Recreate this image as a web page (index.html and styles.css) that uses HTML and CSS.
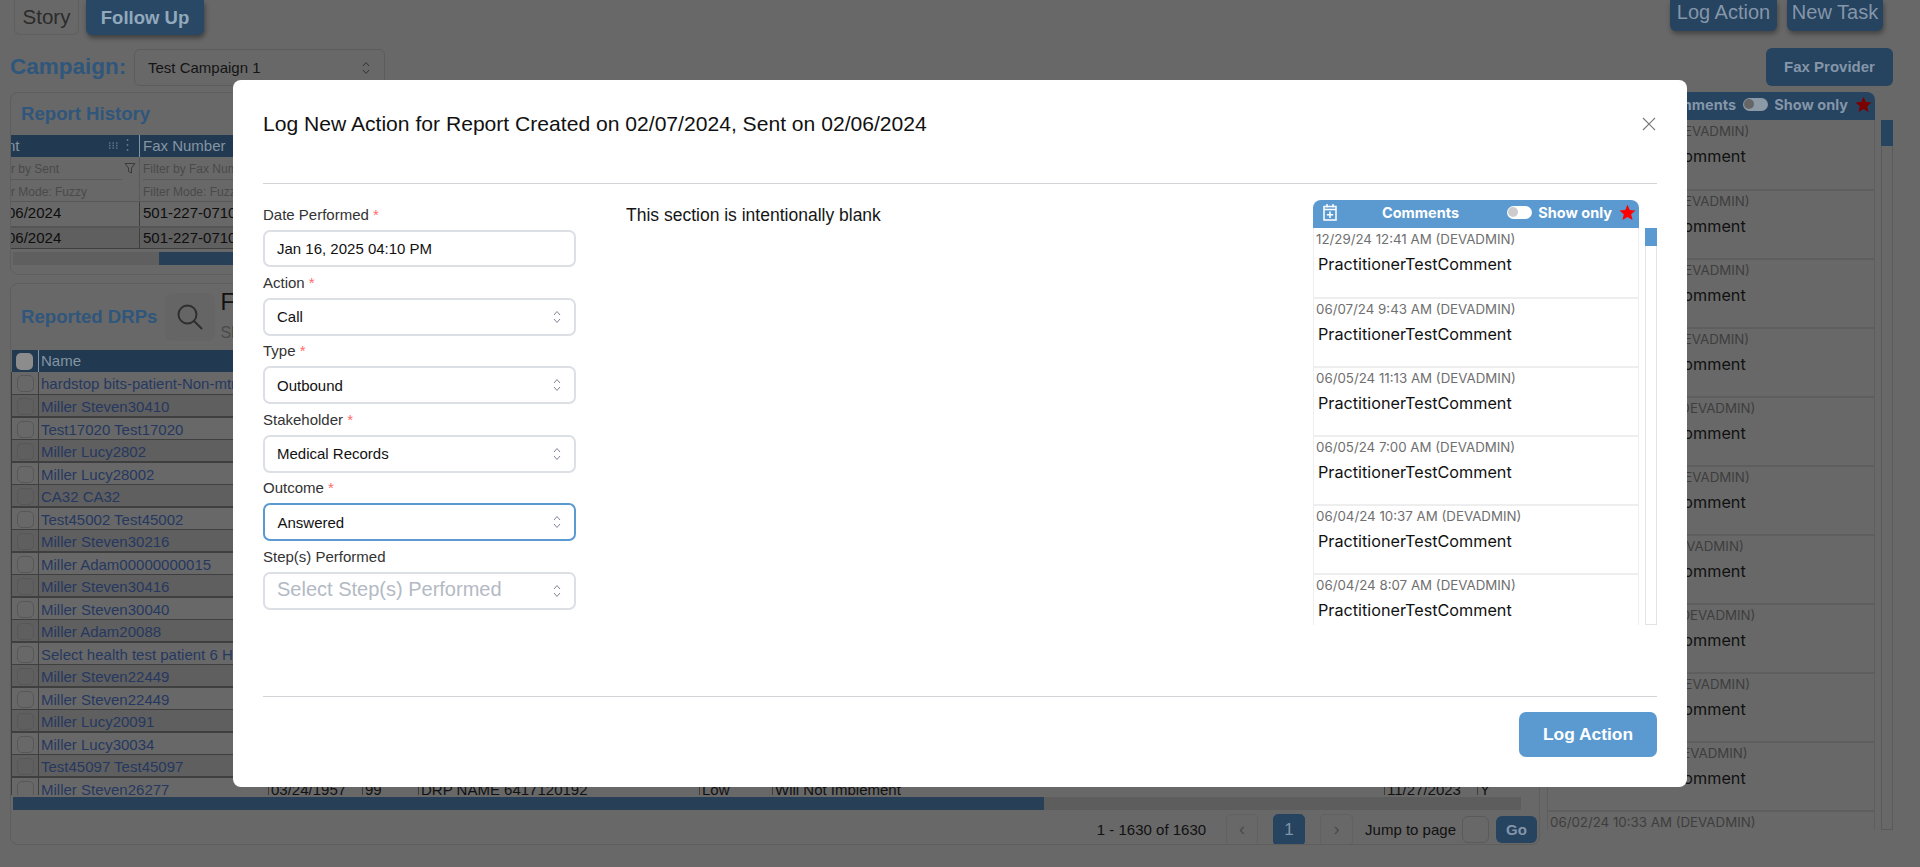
FILE: index.html
```html
<!DOCTYPE html>
<html lang="en">
<head>
    <meta charset="UTF-8">
    <meta name="viewport" content="width=device-width, initial-scale=1.0">
    <title>Log Action</title>
    <link rel="stylesheet" href="styles.css">
</head>
<body>

<svg class="icon-defs" aria-hidden="true">
    <symbol id="chevrons" viewBox="0 0 8 14">
        <path d="M1 5 L4 1.5 L7 5 M1 9 L4 12.5 L7 9" fill="none" stroke="currentColor" stroke-width="1"/>
    </symbol>
    <symbol id="star" viewBox="0 0 20 20">
        <path d="M10 .8 L12.7 7 L19.4 7.6 L14.3 12 L15.9 18.9 L10 15.2 L4.1 18.9 L5.7 12 L.6 7.6 L7.3 7 Z" fill="currentColor"/>
    </symbol>
    <symbol id="calendar" viewBox="0 0 14 18">
        <path d="M1 3.5 H13 V17 H1 Z M1 6.5 H13 M4 1 V4.5 M10 1 V4.5 M7 8.5 V15 M3.8 11.7 H10.2" fill="none" stroke="currentColor" stroke-width="1.5"/>
    </symbol>
</svg>

<div class="page">
    <div class="topbar">
        <div class="tabs">
            <button class="tab">Story</button>
            <button class="tab tab-active">Follow Up</button>
        </div>
        <div class="actions">
            <button class="action-btn">Log Action</button>
            <button class="action-btn">New Task</button>
        </div>
    </div>

    <div class="campaign-row">
        <span class="campaign-label">Campaign:</span>
        <div class="campaign-select">Test Campaign 1
            <svg class="chev"><use href="#chevrons"/></svg>
        </div>
        <button class="fax-btn">Fax Provider</button>
    </div>

    <div class="columns">
        <div class="left-col">
            <section class="card history-card">
                <h3 class="card-title">Report History</h3>
                <div class="history-table">
                    <div class="history-head">
                        <div class="history-col first">nt
                            <span class="col-tools">
                                <svg width="9" height="7" viewBox="0 0 9 7"><path d="M0 1h1.500M3.500 1h1.500M7 1h1.500M0 3.500h1.500M3.500 3.500h1.500M7 3.500h1.500M0 6h1.500M3.500 6h1.500M7 6h1.500" stroke="#5f7488" stroke-width="1.500"/></svg>
                                <svg width="3" height="12" viewBox="0 0 3 12"><path d="M1.500 0v2M1.500 5v2M1.500 10v2" stroke="#5f7488" stroke-width="1.500"/></svg>
                            </span>
                        </div>
                        <div class="history-col">Fax Number</div>
                    </div>
                    <div class="history-filter">
                        <div class="history-col first">
                            <span class="filter-input">r by Sent</span>
                            <svg class="funnel" width="12" height="12" viewBox="0 0 12 12"><path d="M1 1.500 H11 L7.500 6 V11 L4.500 9.500 V6 Z" fill="none" stroke="#3a3a3a" stroke-width="1"/></svg>
                            <span class="filter-mode">r Mode: Fuzzy</span>
                        </div>
                        <div class="history-col">
                            <span class="filter-input">Filter by Fax Number</span>
                            <span class="filter-mode">Filter Mode: Fuzzy</span>
                        </div>
                    </div>
                    <div class="history-row">
                        <div class="history-col first">06/2024</div>
                        <div class="history-col">501-227-0710</div>
                    </div>
                    <div class="history-row alt">
                        <div class="history-col first">06/2024</div>
                        <div class="history-col">501-227-0710</div>
                    </div>
                </div>
                <div class="h-scroll history-scroll"><div class="h-thumb"></div></div>
            </section>

            <section class="card drp-card">
                <div class="drp-top">
                    <h3 class="card-title">Reported DRPs</h3>
                    <div class="search-tile">
                        <svg width="28" height="28" viewBox="0 0 28 28"><circle cx="11.500" cy="11.500" r="9" fill="none" stroke="#2e2e2e" stroke-width="2"/><path d="M18 18 L26 26" stroke="#2e2e2e" stroke-width="2"/></svg>
                    </div>
                    <div class="filter-text">
                        <div class="filter-big">Filters</div>
                        <div class="filter-small">Show</div>
                    </div>
                </div>
                <div class="drp-scroll">
                    <table class="drp-table">
                        <colgroup>
                            <col class="c-check"><col class="c-name"><col class="c-dob"><col class="c-age">
                            <col class="c-drp"><col class="c-sev"><col class="c-status"><col class="c-date"><col class="c-flag">
                        </colgroup>
                        <thead>
                            <tr>
                                <th><span class="check head-check"></span></th>
                                <th>Name</th><th>DOB</th><th>Age</th><th>DRP</th><th>Severity</th><th>Status</th><th>Date</th><th>Y/N</th>
                            </tr>
                        </thead>
                        <tbody>
                            <tr><td><span class="check"></span></td><td class="name">hardstop bits-patient-Non-mtm</td><td colspan="7"></td></tr>
                            <tr><td><span class="check"></span></td><td class="name">Miller Steven30410</td><td colspan="7"></td></tr>
                            <tr><td><span class="check"></span></td><td class="name">Test17020 Test17020</td><td colspan="7"></td></tr>
                            <tr><td><span class="check"></span></td><td class="name">Miller Lucy2802</td><td colspan="7"></td></tr>
                            <tr><td><span class="check"></span></td><td class="name">Miller Lucy28002</td><td colspan="7"></td></tr>
                            <tr><td><span class="check"></span></td><td class="name">CA32 CA32</td><td colspan="7"></td></tr>
                            <tr><td><span class="check"></span></td><td class="name">Test45002 Test45002</td><td colspan="7"></td></tr>
                            <tr><td><span class="check"></span></td><td class="name">Miller Steven30216</td><td colspan="7"></td></tr>
                            <tr><td><span class="check"></span></td><td class="name">Miller Adam00000000015</td><td colspan="7"></td></tr>
                            <tr><td><span class="check"></span></td><td class="name">Miller Steven30416</td><td colspan="7"></td></tr>
                            <tr><td><span class="check"></span></td><td class="name">Miller Steven30040</td><td colspan="7"></td></tr>
                            <tr><td><span class="check"></span></td><td class="name">Miller Adam20088</td><td colspan="7"></td></tr>
                            <tr><td><span class="check"></span></td><td class="name">Select health test patient 6 Health</td><td colspan="7"></td></tr>
                            <tr><td><span class="check"></span></td><td class="name">Miller Steven22449</td><td colspan="7"></td></tr>
                            <tr><td><span class="check"></span></td><td class="name">Miller Steven22449</td><td colspan="7"></td></tr>
                            <tr><td><span class="check"></span></td><td class="name">Miller Lucy20091</td><td colspan="7"></td></tr>
                            <tr><td><span class="check"></span></td><td class="name">Miller Lucy30034</td><td colspan="7"></td></tr>
                            <tr><td><span class="check"></span></td><td class="name">Test45097 Test45097</td><td colspan="7"></td></tr>
                            <tr>
                                <td><span class="check"></span></td><td class="name">Miller Steven26277</td>
                                <td>03/24/1957</td><td>99</td><td>DRP NAME 6417120192</td><td>Low</td><td>Will Not Implement</td><td>11/27/2023</td><td>Y</td>
                            </tr>
                        </tbody>
                    </table>
                </div>
                <div class="h-scroll drp-hscroll"><div class="h-thumb"></div></div>
                <div class="pager">
                    <span class="pager-count">1 - 1630 of 1630</span>
                    <span class="pager-btn">&#8249;</span>
                    <span class="pager-btn current">1</span>
                    <span class="pager-btn">&#8250;</span>
                    <span class="pager-jump">Jump to page</span>
                    <span class="pager-input"></span>
                    <span class="pager-go">Go</span>
                </div>
            </section>
        </div>

        <aside class="comments side-comments">
            <div class="comments-head">
                <svg class="cal-icon"><use href="#calendar"/></svg>
                <span class="comments-title">Comments</span>
                <span class="toggle"></span>
                <span class="show-only">Show only</span>
                <svg class="star-icon"><use href="#star"/></svg>
            </div>
            <div class="comment-list">
                <div class="comment"><div class="comment-date">12/29/24 12:41 AM (DEVADMIN)</div><div class="comment-text">PractitionerTestComment</div></div>
                <div class="comment"><div class="comment-date">06/07/24 9:43 AM (DEVADMIN)</div><div class="comment-text">PractitionerTestComment</div></div>
                <div class="comment"><div class="comment-date">06/05/24 11:13 AM (DEVADMIN)</div><div class="comment-text">PractitionerTestComment</div></div>
                <div class="comment"><div class="comment-date">06/05/24 7:00 AM (DEVADMIN)</div><div class="comment-text">PractitionerTestComment</div></div>
                <div class="comment"><div class="comment-date">06/04/24 10:37 AM (DEVADMIN)</div><div class="comment-text">PractitionerTestComment</div></div>
                <div class="comment"><div class="comment-date">06/04/24 8:07 AM (DEVADMIN)</div><div class="comment-text">PractitionerTestComment</div></div>
                <div class="comment"><div class="comment-date">06/03/24 1:17 AM (DEVADMIN)</div><div class="comment-text">PractitionerTestComment</div></div>
                <div class="comment"><div class="comment-date">06/03/24 10:52 AM (DEVADMIN)</div><div class="comment-text">PractitionerTestComment</div></div>
                <div class="comment"><div class="comment-date">06/03/24 9:28 AM (DEVADMIN)</div><div class="comment-text">PractitionerTestComment</div></div>
                <div class="comment"><div class="comment-date">06/03/24 8:14 AM (DEVADMIN)</div><div class="comment-text">PractitionerTestComment</div></div>
                <div class="comment"><div class="comment-date">06/02/24 10:33 AM (DEVADMIN)</div><div class="comment-text">PractitionerTestComment</div></div>
            </div>
            <div class="v-scroll"><div class="v-thumb"></div></div>
        </aside>
    </div>
</div>

<div class="overlay">
    <div class="modal">
        <div class="modal-header">
            <h2 class="modal-title">Log New Action for Report Created on 02/07/2024, Sent on 02/06/2024</h2>
            <svg class="modal-close" width="14" height="14" viewBox="0 0 14 14"><path d="M1 1 L13 13 M13 1 L1 13" stroke="#7a7a7a" stroke-width="1.200"/></svg>
        </div>

        <div class="modal-body">
            <form class="log-form">
                <div class="field">
                    <label>Date Performed <span class="req">*</span></label>
                    <div class="control control-date">Jan 16, 2025 04:10 PM</div>
                </div>
                <div class="field">
                    <label>Action <span class="req">*</span></label>
                    <div class="control">Call <svg class="chev"><use href="#chevrons"/></svg></div>
                </div>
                <div class="field">
                    <label>Type <span class="req">*</span></label>
                    <div class="control">Outbound <svg class="chev"><use href="#chevrons"/></svg></div>
                </div>
                <div class="field">
                    <label>Stakeholder <span class="req">*</span></label>
                    <div class="control">Medical Records <svg class="chev"><use href="#chevrons"/></svg></div>
                </div>
                <div class="field">
                    <label>Outcome <span class="req">*</span></label>
                    <div class="control control-focus">Answered <svg class="chev"><use href="#chevrons"/></svg></div>
                </div>
                <div class="field">
                    <label>Step(s) Performed</label>
                    <div class="control control-empty"><span class="placeholder">Select Step(s) Performed</span> <svg class="chev"><use href="#chevrons"/></svg></div>
                </div>
            </form>

            <div class="blank-note">This section is intentionally blank</div>

            <aside class="comments modal-comments">
                <div class="comments-head">
                    <svg class="cal-icon"><use href="#calendar"/></svg>
                    <span class="comments-title">Comments</span>
                    <span class="toggle"></span>
                    <span class="show-only">Show only</span>
                    <svg class="star-icon"><use href="#star"/></svg>
                </div>
                <div class="comment-list">
                    <div class="comment"><div class="comment-date">12/29/24 12:41 AM (DEVADMIN)</div><div class="comment-text">PractitionerTestComment</div></div>
                    <div class="comment"><div class="comment-date">06/07/24 9:43 AM (DEVADMIN)</div><div class="comment-text">PractitionerTestComment</div></div>
                    <div class="comment"><div class="comment-date">06/05/24 11:13 AM (DEVADMIN)</div><div class="comment-text">PractitionerTestComment</div></div>
                    <div class="comment"><div class="comment-date">06/05/24 7:00 AM (DEVADMIN)</div><div class="comment-text">PractitionerTestComment</div></div>
                    <div class="comment"><div class="comment-date">06/04/24 10:37 AM (DEVADMIN)</div><div class="comment-text">PractitionerTestComment</div></div>
                    <div class="comment"><div class="comment-date">06/04/24 8:07 AM (DEVADMIN)</div><div class="comment-text">PractitionerTestComment</div></div>
                </div>
                <div class="v-scroll"><div class="v-thumb"></div></div>
            </aside>
        </div>

        <div class="modal-footer">
            <button class="submit-btn" type="button">Log Action</button>
        </div>
    </div>
</div>

</body>
</html>
```

FILE: styles.css
```css
* {
    box-sizing: border-box;
}

html, body {
    height: 867px;
    margin: 0;
    overflow: hidden;
}

body {
    font-family: "Liberation Sans", Arial, sans-serif;
    background-color: #686868;
    color: #111;
}

button {
    font-family: inherit;
    border: none;
}

.icon-defs {
    display: none;
}

/* Page behind the modal */
.page {
    width: 1920px;
    height: 867px;
    padding: 0 27px 0 10px;
}

.topbar {
    display: flex;
    justify-content: space-between;
    align-items: flex-start;
    height: 48px;
}

.tabs {
    display: flex;
    gap: 7px;
    padding-left: 4px;
}

.tab {
    height: 35px;
    width: 65px;
    padding: 0;
    font-size: 20.500px;
    color: #2b2b2b;
    background: transparent;
    border: 1px solid #5f5f5f;
    border-top: none;
    border-radius: 0 0 6px 6px;
}

.tab-active {
    width: 118px;
    padding-top: 1px;
    font-size: 18.500px;
    color: #92a8bc;
    font-weight: bold;
    background-color: #294865;
    border: none;
    box-shadow: 1px 3px 5px rgba(0, 0, 0, 0.4);
}

.actions {
    display: flex;
    gap: 10px;
    margin-right: 10px;
}

.action-btn {
    height: 31px;
    padding: 0 0 6px;
    font-size: 20px;
    color: #8496a8;
    background-color: #264360;
    border-radius: 0 0 6px 6px;
    box-shadow: 1px 3px 5px rgba(0, 0, 0, 0.35);
}

.action-btn:first-child {
    width: 107px;
}

.action-btn:last-child {
    width: 96px;
}

.campaign-row {
    display: flex;
    align-items: center;
    height: 38px;
}

.campaign-label {
    width: 124px;
    font-size: 22.500px;
    font-weight: bold;
    color: #2f567c;
}

.campaign-select {
    position: relative;
    display: flex;
    align-items: center;
    width: 251px;
    height: 37px;
    padding-left: 13px;
    font-size: 15px;
    color: #141414;
    border: 1px solid #5c5c5c;
    border-radius: 6px;
}

.fax-btn {
    width: 127px;
    height: 38px;
    margin-left: auto;
    padding-bottom: 2px;
    font-size: 15px;
    font-weight: bold;
    color: #8496a8;
    background-color: #264360;
    border-radius: 6px;
}

.columns {
    display: grid;
    grid-template-columns: 1530px 346px;
    column-gap: 7px;
    margin-top: 6px;
}

.left-col {
    display: flex;
    flex-direction: column;
    gap: 8px;
}

.card {
    border: 1px solid #5e5e5e;
    border-radius: 8px;
    overflow: hidden;
}

.card-title {
    margin: 0;
    font-size: 18.600px;
    font-weight: bold;
    color: #2f567c;
}

/* Report history */
.history-card {
    height: 183px;
}

.history-card .card-title {
    height: 42px;
    padding: 10px 0 0 10px;
}

.history-head,
.history-filter,
.history-row {
    display: grid;
    grid-template-columns: 129px 1fr;
}

.history-head {
    height: 22px;
    font-size: 15px;
    line-height: 21px;
    color: #8494a3;
    background-color: #223a51;
}

.history-filter {
    height: 45px;
    font-size: 12px;
    color: #4a4a4a;
    border-bottom: 1px solid #585858;
}

.history-col {
    position: relative;
    padding-left: 3px;
    border-right: 1px solid #3f3f3f;
    white-space: nowrap;
    overflow: hidden;
}

.history-col.first {
    padding-left: 0;
}

.history-head .history-col.first,
.history-row .history-col.first {
    text-indent: -4px;
}

.history-head .history-col {
    border-color: #8494a3;
}

.history-filter .history-col {
    border-color: #5a5a5a;
}

.col-tools {
    position: absolute;
    right: 10px;
    top: 4px;
    display: flex;
    align-items: center;
    gap: 8px;
}

.filter-input {
    display: block;
    height: 23px;
    padding-top: 5px;
    margin-right: 4px;
    border-bottom: 1px solid #5a5a5a;
}

.history-filter .history-col.first .filter-input {
    margin-right: 17px;
}

.filter-mode {
    display: block;
    padding-top: 5px;
}

.funnel {
    position: absolute;
    right: 3px;
    top: 5px;
}

.history-row {
    height: 23.500px;
    font-size: 15px;
    line-height: 21px;
    color: #0e0e0e;
}

.history-row.alt {
    line-height: 19px;
    border-top: 2px solid #555;
    border-bottom: 1px solid #3f3f3f;
    background-color: #5f5f5f;
}

.h-scroll {
    height: 13px;
    background-color: #5f5f5f;
}

.h-thumb {
    height: 100%;
    background-color: #283f58;
}

.history-scroll {
    margin: 3px 0 0 2px;
    padding-left: 146px;
}

/* Reported DRPs */
.drp-card {
    height: 562px;
}

.drp-top {
    display: flex;
    align-items: center;
    height: 66px;
    padding-left: 10px;
}

.search-tile {
    display: flex;
    align-items: center;
    justify-content: center;
    width: 50px;
    height: 48px;
    margin-left: 8px;
    border-radius: 8px;
    background-color: #656565;
}

.filter-text {
    margin-left: 5px;
}

.filter-big {
    margin-top: -4px;
    font-size: 23px;
    color: #111;
}

.filter-small {
    margin-top: 8px;
    font-size: 16px;
    color: #4a4a4a;
}

.drp-scroll {
    height: 445px;
    overflow: hidden;
}

.drp-table {
    width: 1525px;
    table-layout: fixed;
    border-collapse: collapse;
    font-size: 15px;
}

.c-check { width: 27px; }
.c-name { width: 230px; }
.c-dob { width: 94px; }
.c-age { width: 56px; }
.c-drp { width: 281px; }
.c-sev { width: 73px; }
.c-status { width: 612px; }
.c-date { width: 93px; }
.c-flag { width: 59px; }

.drp-table th {
    height: 22px;
    padding: 0 0 2px 2px;
    font-weight: normal;
    text-align: left;
    color: #8494a3;
    background-color: #223a51;
    border-right: 1px solid #8494a3;
}

.drp-table th:first-child,
.drp-table td:first-child {
    padding: 0;
    text-align: center;
}

.drp-table td {
    height: 22.500px;
    padding: 2px 0 0 2px;
    line-height: 18px;
    white-space: nowrap;
    overflow: hidden;
    border-left: 1px solid #3d3d3d;
    border-bottom: 1px solid #3f3f3f;
}

.drp-table tbody tr:nth-child(even) td {
    background-color: #5f5f5f;
    border-bottom-width: 2px;
}

.drp-table td.name {
    color: #263860;
}

.check {
    display: inline-block;
    width: 17px;
    height: 17px;
    vertical-align: middle;
    border: 1px solid #575757;
    border-radius: 5px;
}

.head-check {
    border: none;
    background-color: #8c8c8c;
}

.drp-hscroll {
    margin: 2px 18px 0 2px;
    padding-right: 477px;
    background-color: #5d5d5d;
}

.pager {
    display: flex;
    align-items: center;
    justify-content: flex-end;
    height: 35px;
    margin-top: 2px;
    padding-right: 2px;
    font-size: 15px;
}

.pager-count {
    margin-right: 20px;
}

.pager-btn {
    display: flex;
    align-items: center;
    justify-content: center;
    width: 32px;
    height: 32px;
    margin-right: 15px;
    font-size: 18px;
    color: #4a4a4a;
    border: 1px solid #616161;
    border-radius: 5px;
}

.pager-btn.current {
    font-size: 17px;
    color: #7f95a9;
    background-color: #264360;
    border-color: #264360;
}

.pager-btn:nth-child(4) {
    width: 33px;
    margin-right: 12px;
}

.pager-input {
    width: 27px;
    height: 27px;
    margin: 0 7px 0 6px;
    border: 1px solid #5a5a5a;
    border-radius: 6px;
}

.pager-go {
    display: flex;
    align-items: center;
    justify-content: center;
    width: 41px;
    height: 27px;
    font-size: 15px;
    font-weight: bold;
    color: #8496a8;
    background-color: #264360;
    border-radius: 6px;
}

/* Comments panel, same markup behind and inside the modal */
.comments {
    display: grid;
    grid-template-columns: 1fr 12px;
    grid-template-rows: 28px 1fr;
    column-gap: 6px;
    font-family: Inter, "Liberation Sans", sans-serif;
}

.comments-head {
    grid-column: 1 / 3;
    position: relative;
    display: flex;
    align-items: center;
    height: 28px;
    margin-right: 18px;
    padding-bottom: 4px;
    font-size: 14.500px;
    font-weight: bold;
    color: #fff;
    background-color: #5b9ad0;
    border-radius: 8px 8px 0 0;
}

.cal-icon {
    width: 14px;
    height: 18px;
    margin-left: 10px;
}

.comments-title {
    margin-left: 45px;
}

.toggle {
    position: relative;
    width: 25px;
    height: 13px;
    margin-left: auto;
    background-color: #fff;
    border-radius: 7px;
}

.toggle::before {
    content: "";
    position: absolute;
    left: 1px;
    top: 1.500px;
    width: 10px;
    height: 10px;
    background-color: #ccc;
    border-radius: 50%;
}

.show-only {
    margin-left: 6px;
}

.star-icon {
    width: 17px;
    height: 17px;
    margin: 0 3px 0 7px;
    color: #f00;
}

.comment-list {
    overflow: hidden;
    border-left: 1px solid #eee;
    min-height: 0;
}

.comment {
    height: 69.100px;
    padding-left: 2px;
    border-top: 2px solid #eee;
    border-right: 1px solid #eee;
}

.comment:first-child {
    height: 68.500px;
    border-top: none;
}

.comment-date {
    height: 21px;
    font-size: 13.300px;
    line-height: 21px;
    color: #6f6f6f;
    white-space: nowrap;
}

.comment:first-child .comment-date {
    height: 22px;
    line-height: 22px;
}

.comment-text {
    margin-top: 3px;
    padding-left: 2px;
    font-size: 16.200px;
    line-height: 22px;
    color: #111;
    white-space: nowrap;
}

.v-scroll {
    background-color: #fff;
    border: 1px solid #e3e3e3;
    border-top: none;
}

.v-thumb {
    height: 18px;
    margin: 0 -1px;
    background-color: #5b9ad0;
}

.side-comments {
    height: 738px;
}

.side-comments .comments-head {
    color: #8496a8;
    background-color: #264360;
}

.side-comments .comments-title {
    margin-left: 88px;
}

.side-comments .toggle {
    background-color: #8c9aa6;
}

.side-comments .toggle::before {
    background-color: #666;
}

.side-comments .star-icon {
    color: #7d0000;
}

.side-comments .comment-list {
    border-color: #5e5e5e;
}

.side-comments .comment {
    border-color: #5e5e5e;
}

.side-comments .comment-date {
    color: #3e3e3e;
}

.side-comments .v-scroll {
    background-color: transparent;
    border-color: #5a5a5a;
}

.side-comments .v-thumb {
    height: 26px;
    background-color: #264360;
}

/* Modal */
.overlay {
    position: fixed;
    top: 0;
    left: 0;
    width: 100%;
    height: 100%;
    display: flex;
    justify-content: center;
    align-items: flex-start;
    padding-top: 80px;
}

.modal {
    width: 1454px;
    height: 707px;
    padding: 0 30px;
    background-color: #fff;
    border-radius: 8px;
}

.modal-header {
    display: flex;
    justify-content: space-between;
    height: 104px;
    padding-top: 32px;
    border-bottom: 1px solid #d4d4d8;
}

.modal-title {
    margin: 0;
    font-size: 21.100px;
    font-weight: normal;
    line-height: 24px;
    color: #111;
}

.modal-close {
    margin: 5px 1px 0 0;
}

.modal-body {
    display: grid;
    grid-template-columns: 313px 1fr 344px;
    height: 512px;
    padding-top: 21px;
}

.field {
    margin-bottom: 5.500px;
}

.field label {
    display: block;
    height: 20px;
    margin-bottom: 5px;
    font-size: 15px;
    line-height: 20px;
    color: #333;
}

.req {
    color: #ff6b6b;
}

.control {
    display: flex;
    align-items: center;
    justify-content: space-between;
    height: 38px;
    padding: 0 13px 0 12px;
    font-size: 15px;
    color: #111;
    background-color: #fff;
    border: 2px solid #dcdfe4;
    border-radius: 7px;
}

.control-date {
    height: 37px;
}

.control-focus {
    padding-left: 12.500px;
    border-color: #5b9ad0;
}

.placeholder {
    margin-top: -3px;
    font-size: 20px;
    color: #b3bac4;
}

.chev {
    flex: none;
    width: 8px;
    height: 14px;
    color: #7f8792;
}

.campaign-select .chev {
    position: absolute;
    right: 14px;
    top: 11px;
    color: #333;
}

.blank-note {
    padding: 0 0 0 50px;
    margin-top: -1px;
    font-size: 17.500px;
    line-height: 22px;
    color: #151515;
}

.modal-comments {
    height: 425px;
    margin-top: -5px;
}

.modal-footer {
    display: flex;
    justify-content: flex-end;
    padding-top: 15px;
    border-top: 1px solid #d4d4d8;
}

.submit-btn {
    width: 138px;
    height: 45px;
    padding-bottom: 2px;
    font-size: 17.400px;
    font-weight: bold;
    color: #fff;
    background-color: #5b9ad0;
    border-radius: 7px;
}
```
